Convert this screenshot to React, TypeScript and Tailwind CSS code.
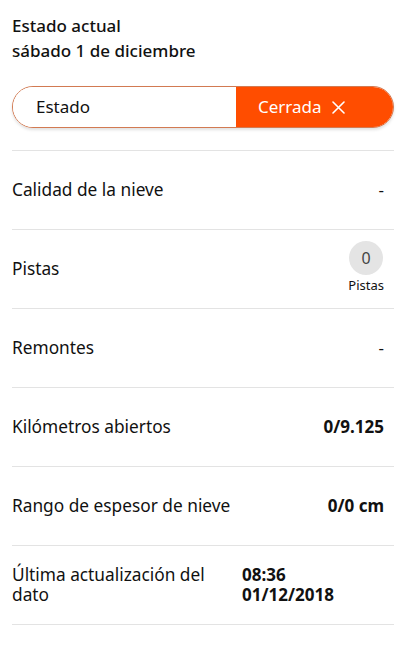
import React from "react";

const Row = ({ label, value, bold }: { label: React.ReactNode; value: React.ReactNode; bold?: boolean }) => (
  <div className="flex items-center justify-between h-[79px] border-b border-[#e3e3e3] pr-[10px]">
    <div className="text-[17.3px] text-[#111]">{label}</div>
    <div className={`text-[17px] text-[#111] ${bold ? "font-bold" : ""}`}>{value}</div>
  </div>
);

export default function App() {
  return (
    <div className="w-[406px] h-[650px] bg-white px-3 pt-[13px] text-[#111]" style={{ fontFamily: '"Noto Sans", "Open Sans", sans-serif' }}>
      <div className="text-[17px] font-medium leading-[25px]">
        <div>Estado actual</div>
        <div>sábado 1 de diciembre</div>
      </div>
      <div className="mt-[23px] flex h-[42px] rounded-full border border-[#d27a52] overflow-hidden shadow-[0_2px_3px_rgba(0,0,0,0.12)]">
        <div className="flex items-center w-[223px] pl-[23px] text-[17px] bg-white">Estado</div>
        <div className="flex-1 flex items-center pl-[22px] gap-[10px] bg-[#ff4d00] text-white text-[17px]">
          <span>Cerrada</span>
          <svg width="13" height="13" viewBox="0 0 13 13" stroke="white" strokeWidth="1.6" strokeLinecap="round">
            <path d="M1 1L12 12M12 1L1 12" />
          </svg>
        </div>
      </div>
      <div className="mt-[22px] border-t border-[#e3e3e3]" />
      <Row label="Calidad de la nieve" value="-" />
      <div className="flex items-center justify-between h-[79px] border-b border-[#e3e3e3] pr-[10px]">
        <div className="text-[17.3px]">Pistas</div>
        <div className="flex flex-col items-center mt-[-4px]">
          <div className="w-[34px] h-[34px] rounded-full bg-[#e4e4e4] flex items-center justify-center text-[16px] text-[#444]">0</div>
          <div className="text-[13px] leading-[16px] mt-[2px]">Pistas</div>
        </div>
      </div>
      <Row label="Remontes" value="-" />
      <Row label="Kilómetros abiertos" value="0/9.125" bold />
      <Row label="Rango de espesor de nieve" value="0/0 cm" bold />
      <div className="flex items-center h-[79px] border-b border-[#e3e3e3]">
        <div className="w-[230px] pr-[12px] text-[17.3px] leading-[20px]">Última actualización del dato</div>
        <div className="text-[17px] font-bold leading-[20px]">
          <div>08:36</div>
          <div>01/12/2018</div>
        </div>
      </div>
    </div>
  );
}
